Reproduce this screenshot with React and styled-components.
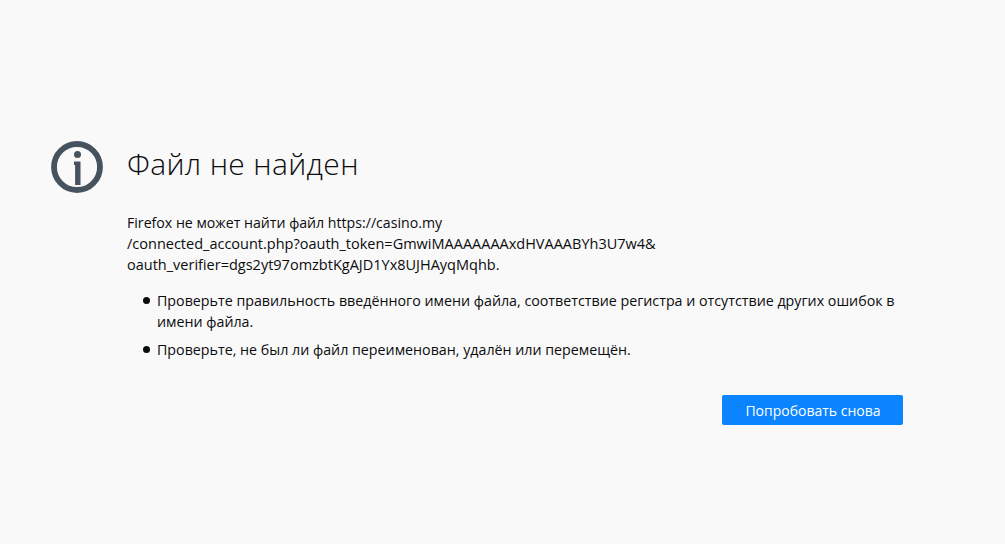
import React from "react";
import styled, { createGlobalStyle } from "styled-components";

const Global = createGlobalStyle`
  html, body { margin: 0; padding: 0; height: 100%; background: #f9f9fa; }
  body { font-family: "Segoe UI", "Open Sans", "Noto Sans", sans-serif; color: #0c0c0d; }
`;
const Page = styled.main`
  width: 1005px; height: 544px; box-sizing: border-box; background: #f9f9fa;
  display: flex; padding: 141px 0 0 51px; gap: 24px; overflow: hidden;
`;
const IconWrap = styled.div`width: 52px; height: 52px; flex: none;`;
const Content = styled.div`width: 776px; display: flex; flex-direction: column;`;
const Title = styled.h1`margin: 0; font-size: 30px; line-height: 46px; font-weight: 300; letter-spacing: 0.35px; color: #0c0c0d;`;
const Para = styled.p`margin: 25px 0 0; line-height: 21px;`;
const Line = styled.span`display: block; font-size: ${(p) => p.$size}px;`;
const List = styled.ul`margin: 15px 0 0; padding: 0 0 0 30px; list-style: none; display: flex; flex-direction: column; gap: 7px;`;
const Item = styled.li`
  position: relative; font-size: 14.25px; line-height: 21px;
  &::before { content: ""; position: absolute; left: -14px; top: 7px; width: 7px; height: 7px; border-radius: 50%; background: #0c0c0d; }
`;
const Actions = styled.div`display: flex; justify-content: flex-end; margin-top: 35px;`;
const Button = styled.button`
  width: 181px; height: 30px; border: 0; border-radius: 2px; background: #0a84ff; color: #fff;
  font: inherit; font-size: 14px; padding: 0 0 0 1px;
`;
export default function App() {
  return (
    <>
      <Global />
      <Page>
        <IconWrap>
          <svg width="52" height="52" viewBox="0 0 52 52">
            <circle cx="26" cy="26" r="23" fill="none" stroke="#47525f" strokeWidth="5.8" />
            <circle cx="26.5" cy="13.5" r="3.5" fill="#47525f" />
            <path d="M23 20.5h6.5V44h-5.4V24H23z" fill="#47525f" />
          </svg>
        </IconWrap>
        <Content>
          <Title>Файл не найден</Title>
          <Para>
            <Line $size={14.15}>Firefox не может найти файл https://casino.my</Line>
            <Line $size={14.5}>/connected_account.php?oauth_token=GmwiMAAAAAAAxdHVAAABYh3U7w4&amp;</Line>
            <Line $size={14.5}>oauth_verifier=dgs2yt97omzbtKgAJD1Yx8UJHAyqMqhb.</Line>
          </Para>
          <List>
            <Item>Проверьте правильность введённого имени файла, соответствие регистра и отсутствие других ошибок в имени файла.</Item>
            <Item>Проверьте, не был ли файл переименован, удалён или перемещён.</Item>
          </List>
          <Actions><Button>Попробовать снова</Button></Actions>
        </Content>
      </Page>
    </>
  );
}
